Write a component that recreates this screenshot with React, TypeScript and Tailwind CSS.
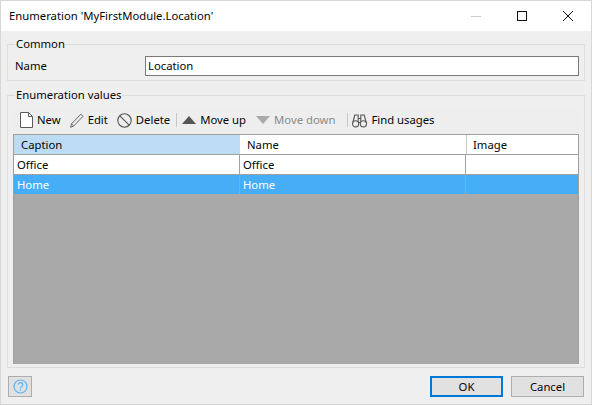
const textFont = "font-['Noto_Sans',sans-serif] text-[11.3px] leading-[16px] text-[#050505]";

const NewIcon = () => (
  <svg width="13" height="16" viewBox="0 0 13 16" fill="none" stroke="#5a5a5a" strokeWidth="1">
    <path d="M.5 .5h8l4 4v11H.5z" fill="#fff" />
    <path d="M8.5 .5v4h4" />
  </svg>
);

const EditIcon = () => (
  <svg width="14" height="15" viewBox="0 0 14 15" fill="none" stroke="#666" strokeWidth="1">
    <path d="M.7 14.3l.8-3.4L10.9 1.2l2.1 2.1-9.3 9.7z" />
    <path d="M1.5 10.9l2.2 2.1" />
  </svg>
);

const DeleteIcon = () => (
  <svg width="15" height="15" viewBox="0 0 15 15" fill="none" stroke="#555" strokeWidth="1.1">
    <circle cx="7.5" cy="7.5" r="6.7" />
    <path d="M2.8 2.8l9.4 9.4" />
  </svg>
);

const Triangle = ({ down }: { down?: boolean }) => (
  <svg width="14" height="8" viewBox="0 0 14 8" fill={down ? '#aaaaaa' : '#555555'}>
    <path d={down ? 'M0 0h14L7 8z' : 'M7 0l7 8H0z'} />
  </svg>
);

const Binoculars = () => (
  <svg width="15" height="15" viewBox="0 0 15 15" fill="none" stroke="#555" strokeWidth="1.1">
    <circle cx="3.6" cy="10.8" r="3.1" />
    <circle cx="11.4" cy="10.8" r="3.1" />
    <path d="M.8 9.5L2.8 2h3.4v7M14.2 9.5L12.2 2H8.8v7M6.2 5.5h2.6M6.2 9.5h2.6" />
  </svg>
);

const Sep = ({ className }: { className: string }) => <div className={`w-px h-[14px] bg-[#c8c8c8] ${className}`} />;

const ToolButton = ({ icon, label, disabled, className }: { icon: React.ReactNode; label: string; disabled?: boolean; className?: string }) => (
  <div className={`flex items-center gap-[4px] ${disabled ? 'text-[#8a8a8a]' : ''} ${className ?? ''}`}>
    {icon}
    <span>{label}</span>
  </div>
);

const Group = ({ title, className, children }: { title: string; className?: string; children: React.ReactNode }) => (
  <fieldset className={`border border-[#dcdcdc] px-[5px] ${className ?? ''}`}>
    <legend className="ml-[2px] px-[1px] leading-[14px]">{title}</legend>
    {children}
  </fieldset>
);

const App = () => {
  return (
    <div className={`w-[592px] h-[405px] bg-[#efefef] border border-[#d6d6d6] flex flex-col overflow-hidden ${textFont}`}>
      <div className="h-[30px] bg-white flex items-center justify-between pl-[8px] shrink-0">
        <span>Enumeration 'MyFirstModule.Location'</span>
        <div className="flex items-center">
          <div className="w-[46px] flex justify-center">
            <div className="w-[10px] h-px bg-[#cccccc]" />
          </div>
          <div className="w-[46px] flex justify-center">
            <div className="w-[10px] h-[10px] border border-[#111]" />
          </div>
          <div className="w-[46px] flex justify-center">
            <svg width="10" height="10" viewBox="0 0 10 10" stroke="#111" strokeWidth="1">
              <path d="M0 0l10 10M10 0L0 10" />
            </svg>
          </div>
        </div>
      </div>

      <div className="flex-1 flex flex-col px-[6px] pt-[6px]">
        <Group title="Common" className="h-[44px]">
          <div className="flex items-center mt-[5px] h-[20px]">
            <span className="w-[132px] pl-[2px]">Name</span>
            <div className="flex-1 h-[20px] bg-white border border-[#7a7a7a] pl-[2px] flex items-center">Location</div>
          </div>
        </Group>

        <Group title="Enumeration values" className="h-[280px] mt-[7px]">
          <div className="flex items-center gap-[9px] h-[27px] mt-[5px] pl-[7px] pb-px bg-[#eeeeee]">
            <ToolButton icon={<NewIcon />} label="New" />
            <ToolButton icon={<EditIcon />} label="Edit" />
            <ToolButton icon={<DeleteIcon />} label="Delete" />
            <Sep className="-ml-[3px] -mr-[4px]" />
            <ToolButton icon={<Triangle />} label="Move up" />
            <ToolButton icon={<Triangle down />} label="Move down" disabled className="ml-px" />
            <Sep className="ml-[3px] -mr-[5px]" />
            <ToolButton icon={<Binoculars />} label="Find usages" />
          </div>

          <div className="h-[230px] bg-[#a9a9a9] border-t border-x border-[#a0a0a0] flex flex-col">
            <div className="grid grid-cols-[226px_226px_1fr] h-[20px] bg-white border-b border-[#a0a0a0]">
              <div className="bg-[#bcdcf3] pl-[7px] flex items-center">Caption</div>
              <div className="pl-[7px] flex items-center">Name</div>
              <div className="pl-[6px] flex items-center border-l border-[#c8c8c8]">Image</div>
            </div>
            <div className="grid grid-cols-[226px_226px_1fr] h-[20px] bg-white border-b border-[#a0a0a0]">
              <div className="pl-[3px] flex items-center border-r border-[#a0a0a0]">Office</div>
              <div className="pl-[3px] flex items-center border-r border-[#a0a0a0]">Office</div>
              <div />
            </div>
            <div className="grid grid-cols-[226px_226px_1fr] h-[19px] bg-[#45aef7] text-white">
              <div className="pl-[3px] flex items-center border-r border-[#8fa9bb]">Home</div>
              <div className="pl-[3px] flex items-center border-r border-[#8fa9bb]">Home</div>
              <div />
            </div>
          </div>
        </Group>

        <div className="flex items-center justify-between mt-[8px] pl-px pr-px">
          <div className="w-[24px] h-[21px] bg-[#e1e1e1] border border-[#adadad] flex items-center justify-center">
            <svg width="15" height="15" viewBox="0 0 15 15" fill="none" stroke="#5db4f5" strokeWidth="1.2">
              <circle cx="7.5" cy="7.5" r="6.5" />
              <path d="M5.2 5.8c0-3 4.6-3 4.6 0 0 1.8-2.3 1.8-2.3 3.6M7.5 10.6v1.3" />
            </svg>
          </div>
          <div className="flex gap-[8px]">
            <div className="w-[73px] h-[21px] bg-[#e1e1e1] border-2 border-[#0078d7] flex items-center justify-center">OK</div>
            <div className="w-[73px] h-[21px] bg-[#e1e1e1] border border-[#adadad] flex items-center justify-center">Cancel</div>
          </div>
        </div>
      </div>
    </div>
  );
};

export default App;
